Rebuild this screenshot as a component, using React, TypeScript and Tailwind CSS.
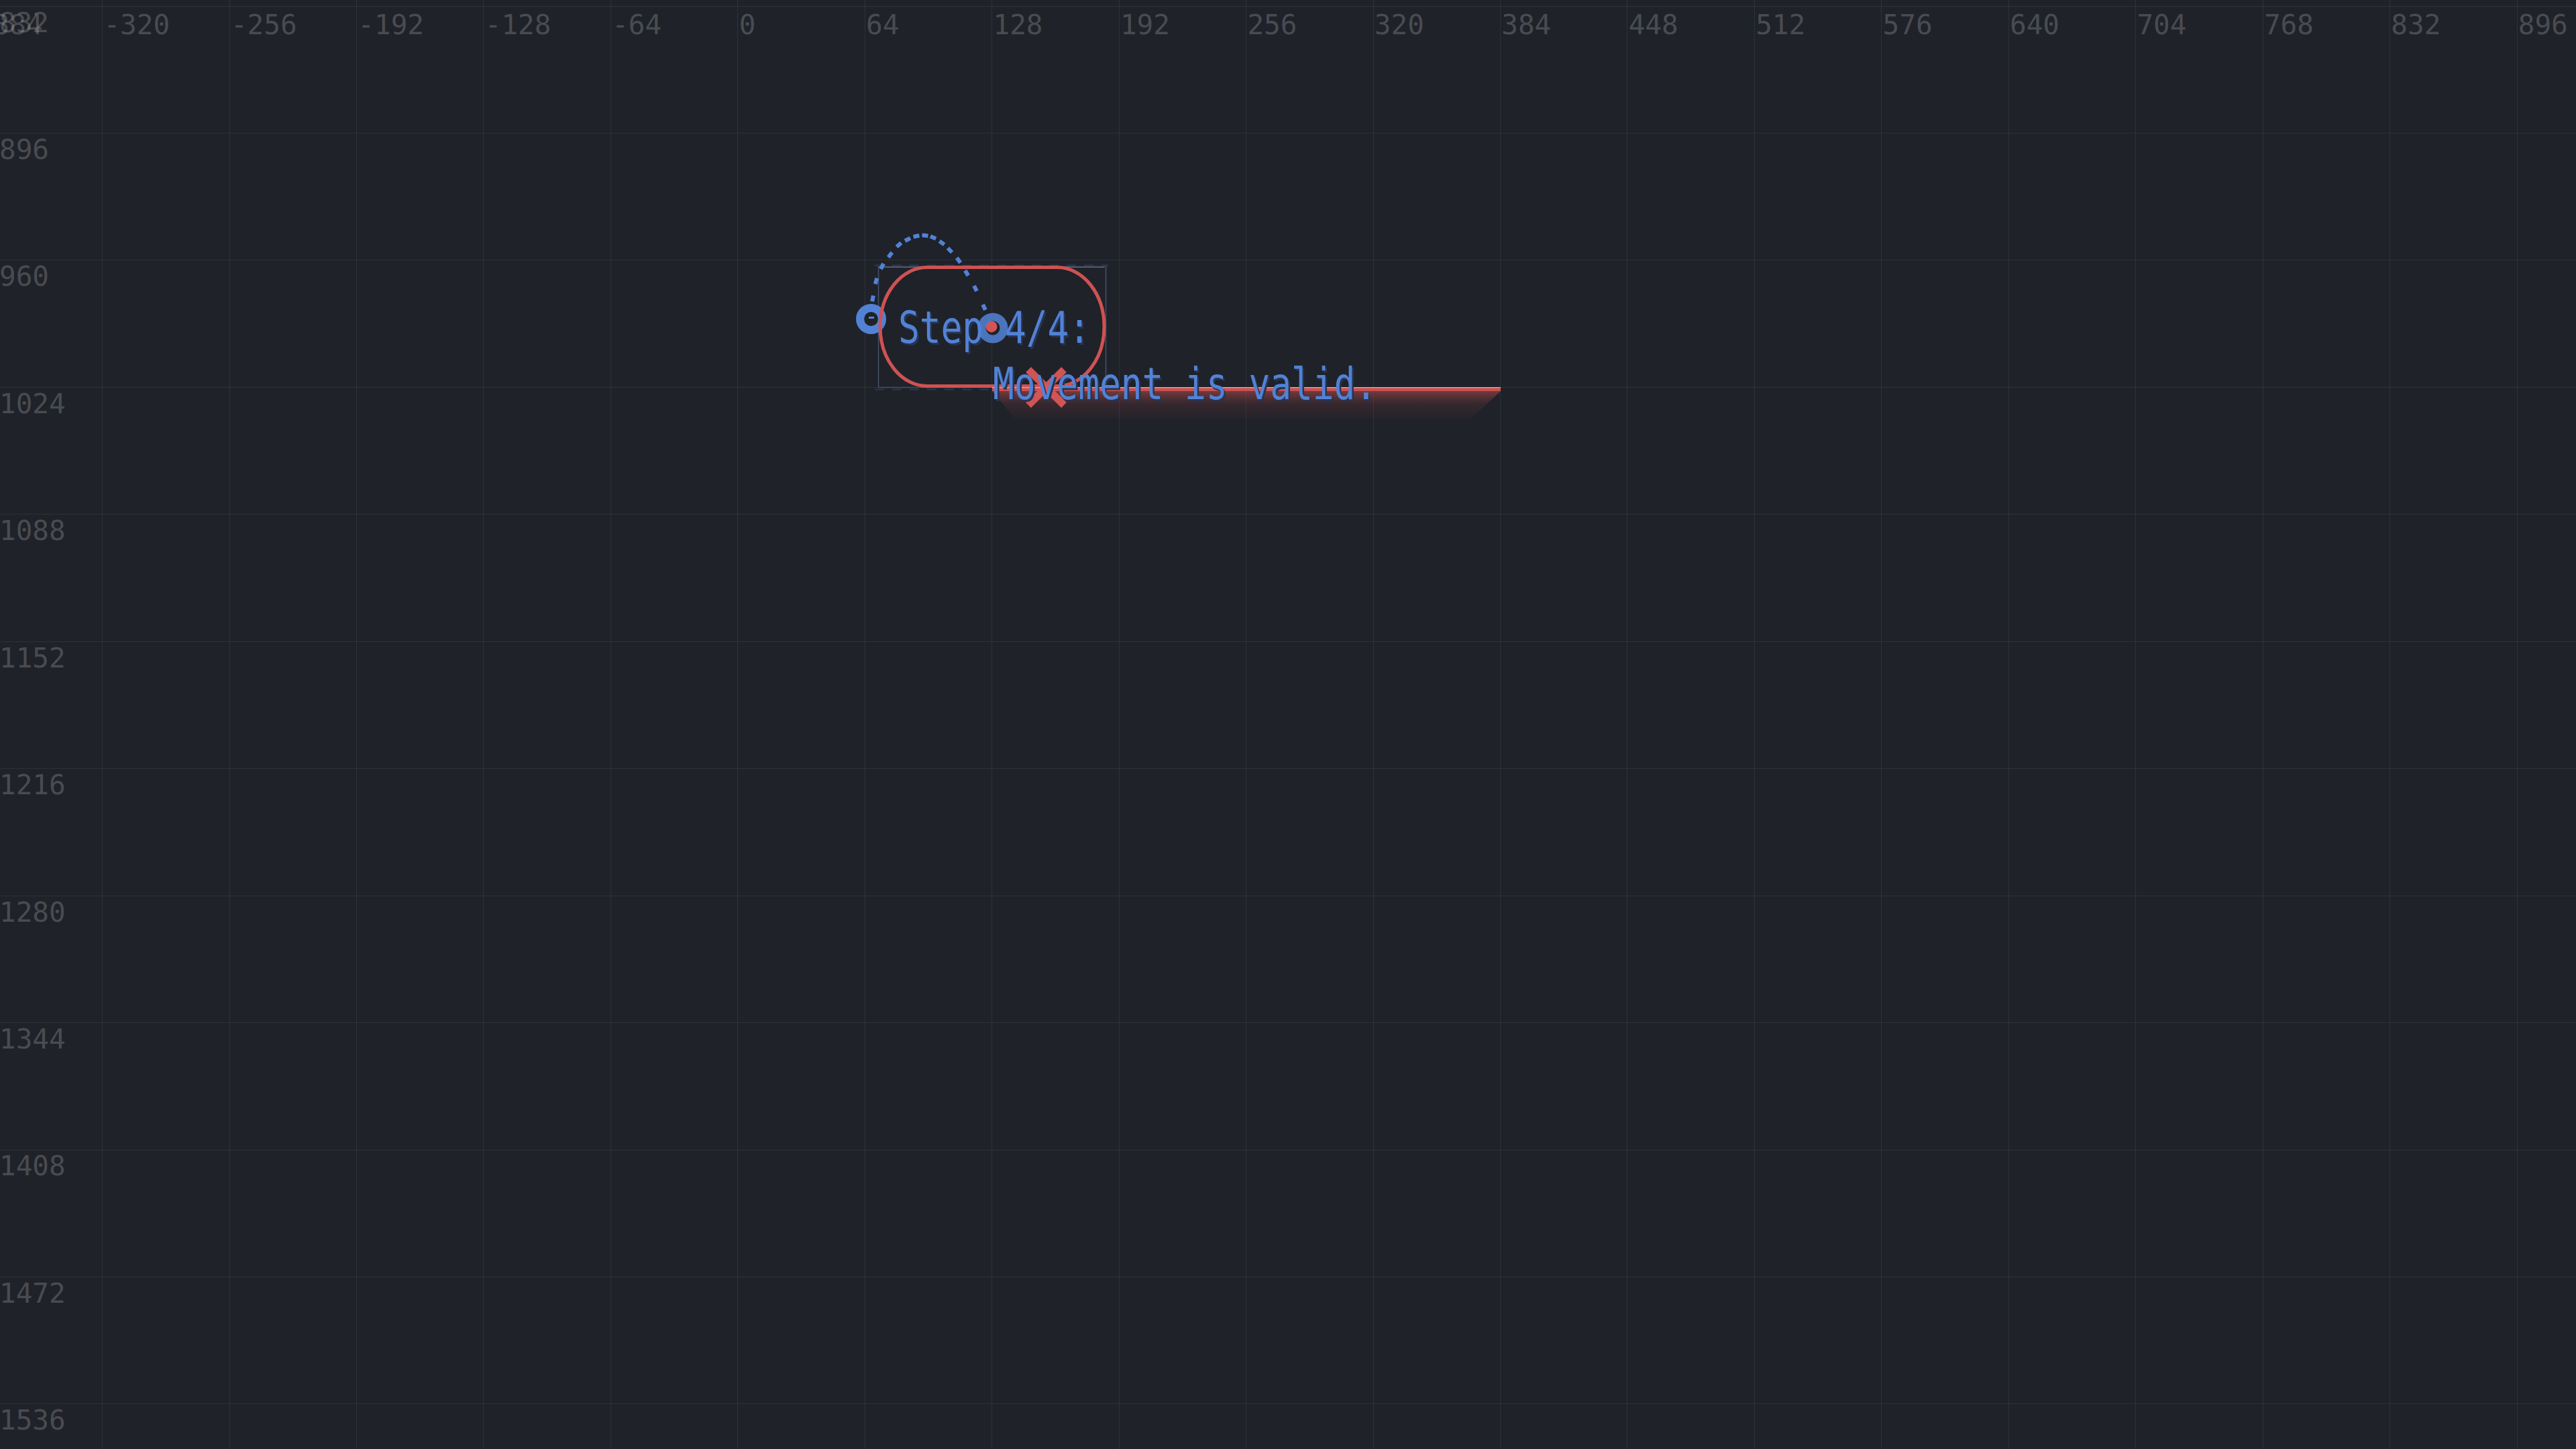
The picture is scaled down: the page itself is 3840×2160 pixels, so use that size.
const STEP = 189.45; // screen px per 64 world units
const ORIGIN_X = 1099.3;
const TOP_Y = 8.5; // screen y of world y = 832

const cols: number[] = [];
for (let u = -384; u <= 896; u += 64) cols.push(u);
const rows: number[] = [];
for (let u = 832; u <= 1536; u += 64) rows.push(u);

// dotted rotation arc over the shape
const arcDots: [number, number, number][] = [
  [1301, 445, -79],
  [1306, 419, -74],
  [1315, 397, -62],
  [1327, 380, -52],
  [1340, 365, -41],
  [1353, 357, -27],
  [1366, 352, -13],
  [1379, 351, 5],
  [1391, 354, 24],
  [1404, 362, 37],
  [1416, 373, 46],
  [1429, 388, 54],
  [1441, 407, 59],
  [1454, 430, 63],
  [1467, 458, 65],
];

function Grid() {
  return (
    <svg className="absolute inset-0" width={3840} height={2160} viewBox="0 0 3840 2160">
      <g stroke="#ffffff" strokeOpacity="0.07" strokeWidth="1">
        {cols.map((u) => {
          const x = Math.round(ORIGIN_X + (u / 64) * STEP) + 0.5;
          return <line key={"v" + u} x1={x} y1="0" x2={x} y2="2160" />;
        })}
        {rows.map((u) => {
          const y = Math.round(TOP_Y + ((u - 832) / 64) * STEP) + 0.5;
          return <line key={"h" + u} x1="0" y1={y} x2="3840" y2={y} />;
        })}
      </g>
    </svg>
  );
}

function Rulers() {
  return (
    <>
      <div className="absolute left-[-35px] top-[17px] flex font-['DejaVu_Sans_Mono',monospace] text-[41px] leading-none text-white/20">
        {cols.map((u) => (
          <div key={u} className="w-[189.45px] shrink-0 whitespace-pre">
            {u}
          </div>
        ))}
      </div>
      <div className="absolute left-[-1px] top-[13.5px] flex flex-col font-['DejaVu_Sans_Mono',monospace] text-[41px] leading-none text-white/20">
        {rows.map((u) => (
          <div key={u} className="h-[189.45px] shrink-0 whitespace-pre">
            {u}
          </div>
        ))}
      </div>
    </>
  );
}

function ShapeUnder() {
  return (
    <svg className="absolute inset-0" width={3840} height={2160} viewBox="0 0 3840 2160">
      <defs>
        <linearGradient id="barShade" x1="0" y1="0" x2="0" y2="1">
          <stop offset="0" stopColor="#c85050" stopOpacity="0.5" />
          <stop offset="0.45" stopColor="#b04848" stopOpacity="0.16" />
          <stop offset="1" stopColor="#a04040" stopOpacity="0.04" />
        </linearGradient>
      </defs>

      {/* bounding box */}
      <line x1="1304" y1="395.5" x2="1652" y2="395.5" stroke="#2b3756" strokeWidth="2" strokeDasharray="14 12" />
      <line x1="1304" y1="580.5" x2="1652" y2="580.5" stroke="#2b3756" strokeWidth="2" strokeDasharray="14 12" />
      <rect x="1309.5" y="397.5" width="339" height="180" fill="none" stroke="#46506a" strokeWidth="1.5" />
      <line x1="1310" y1="398.5" x2="1646" y2="398.5" stroke="#7a6038" strokeWidth="1" />

      {/* left handle */}
      <circle cx="1298.5" cy="475.5" r="16.5" fill="none" stroke="#5282d6" strokeWidth="12" />
      <rect x="1295" y="472" width="8" height="3" fill="#5282d6" />

      {/* capsule */}
      <rect x="1312" y="398.5" width="334" height="177" rx="70" ry="88.5" fill="none" stroke="#cf5252" strokeWidth="5" />

      {/* arc */}
      {arcDots.map(([x, y, a], i) => (
        <rect key={i} x={x - 4.5} y={y - 3} width="9" height="6" fill="#5282d6" transform={`rotate(${a} ${x} ${y})`} />
      ))}

      {/* floor bar */}
      <polygon points="1479,583 2237,583 2193,624 1513,624" fill="url(#barShade)" />
      <rect x="1479" y="577" width="758" height="6" fill="#c95151" />
      <rect x="1479" y="577" width="758" height="1.5" fill="#e69a96" />

      {/* collision marker */}
      <g stroke="#d95757" strokeWidth="11" opacity="0.95">
        <line x1="1533" y1="551" x2="1586" y2="604" />
        <line x1="1586" y1="551" x2="1533" y2="604" />
      </g>
    </svg>
  );
}

function ShapeOver() {
  return (
    <svg className="absolute inset-0" width={3840} height={2160} viewBox="0 0 3840 2160">
      <circle cx="1478" cy="487" r="8.5" fill="#d25454" />
      <circle cx="1480" cy="489" r="16.5" fill="none" stroke="#5282d6" strokeWidth="12" opacity="0.85" />
    </svg>
  );
}

export default function App() {
  return (
    <div className="relative w-[3840px] h-[2160px] overflow-hidden bg-[#1f2229]">
      <Grid />
      <Rulers />
      <ShapeUnder />

      {/* debug label, anchored on the node */}
      <div className="absolute left-[1339px] top-[456px] flex flex-col gap-[18px] font-['DejaVu_Sans_Mono',monospace] text-[66px] leading-none text-[#5282d6] [text-shadow:3px_3px_0_#28344f]">
        <div className="origin-left scale-x-[0.8] whitespace-pre">Step 4/4:</div>
        <div className="ml-[141px] origin-left scale-x-[0.8] whitespace-pre">Movement is valid.</div>
      </div>

      <ShapeOver />
    </div>
  );
}
